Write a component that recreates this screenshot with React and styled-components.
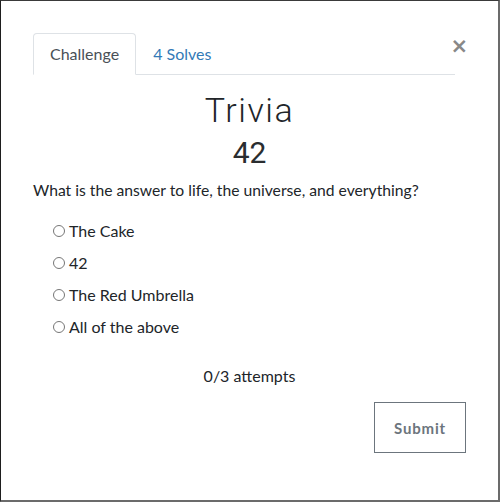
import React from 'react';
import styled, { createGlobalStyle } from 'styled-components';

const GlobalStyle = createGlobalStyle`
  html, body {
    margin: 0;
    padding: 0;
    background: #fff;
  }
  body {
    font-family: Lato, "Open Sans", sans-serif;
    color: #212529;
  }
`;

const Modal = styled.div`
  box-sizing: border-box;
  width: 500px;
  height: 502px;
  background: #fff;
  border-left: 1px solid #1e1e1e;
  border-top: 1px solid #3a3a3a;
  border-right: 2px solid #6b6b6b;
  border-bottom: 2px solid #6b6b6b;
  padding: 32px 32px 0 32px;
  display: flex;
  flex-direction: column;
`;

const Header = styled.div`
  display: flex;
  align-items: flex-start;
`;

const TabList = styled.div`
  flex: 1;
  display: flex;
  border-bottom: 1px solid #dee2e6;
`;

const Tab = styled.div`
  padding: 10px 16px;
  line-height: 20px;
  font-size: 16px;
  margin-bottom: -1px;
  border: 1px solid ${p => (p.$active ? '#dee2e6' : 'transparent')};
  border-bottom-color: ${p => (p.$active ? '#fff' : 'transparent')};
  border-radius: 4px 4px 0 0;
  color: ${p => (p.$active ? '#495057' : '#337ab7')};
`;

const Close = styled.button`
  width: 13px;
  padding: 0;
  margin: 3px -2px 0 0;
  border: none;
  background: none;
  color: #888;
  font-family: "DejaVu Sans", sans-serif;
  font-weight: bold;
  font-size: 21px;
  line-height: 20px;
  display: flex;
  justify-content: flex-end;
  cursor: pointer;
`;

const Title = styled.h2`
  margin: 14px 0 0;
  text-align: center;
  font-family: Roboto, sans-serif;
  font-size: 34px;
  font-weight: 300;
  line-height: 42px;
  letter-spacing: 1.5px;
`;

const Value = styled.h3`
  margin: 4px 0 0;
  text-align: center;
  font-family: Roboto, sans-serif;
  font-size: 30px;
  font-weight: 400;
  line-height: 36px;
  color: #2a2d30;
`;

const Question = styled.p`
  margin: 7px 0 17px;
  font-size: 15.7px;
  line-height: 24px;
`;

const Options = styled.div`
  display: flex;
  flex-direction: column;
  gap: 8px;
  padding-left: 20px;
`;

const Option = styled.label`
  display: flex;
  align-items: center;
  font-size: 16px;
  line-height: 24px;
`;

const Radio = styled.input`
  width: 12px;
  height: 12px;
  margin: 0 4px 0 0;
`;

const Attempts = styled.p`
  margin: 25px 0 0;
  text-align: center;
  font-size: 16px;
  line-height: 24px;
`;

const Footer = styled.div`
  display: flex;
  justify-content: flex-end;
  margin-top: 14px;
`;

const SubmitButton = styled.button`
  box-sizing: border-box;
  width: 92px;
  height: 51px;
  background: #fff;
  border: 1px solid #6c757d;
  border-radius: 0;
  color: #6c757d;
  font-family: Lato, sans-serif;
  font-weight: 700;
  font-size: 15px;
  letter-spacing: 0.8px;
`;

const answers = ['The Cake', '42', 'The Red Umbrella', 'All of the above'];

const App = () => (
  <Modal>
    <GlobalStyle />
    <Header>
      <TabList>
        <Tab $active>Challenge</Tab>
        <Tab>4 Solves</Tab>
      </TabList>
      <Close>×</Close>
    </Header>
    <Title>Trivia</Title>
    <Value>42</Value>
    <Question>What is the answer to life, the universe, and everything?</Question>
    <Options>
      {answers.map(a => (
        <Option key={a}>
          <Radio type="radio" name="answer" />
          {a}
        </Option>
      ))}
    </Options>
    <Attempts>0/3 attempts</Attempts>
    <Footer>
      <SubmitButton>Submit</SubmitButton>
    </Footer>
  </Modal>
);

export default App;
